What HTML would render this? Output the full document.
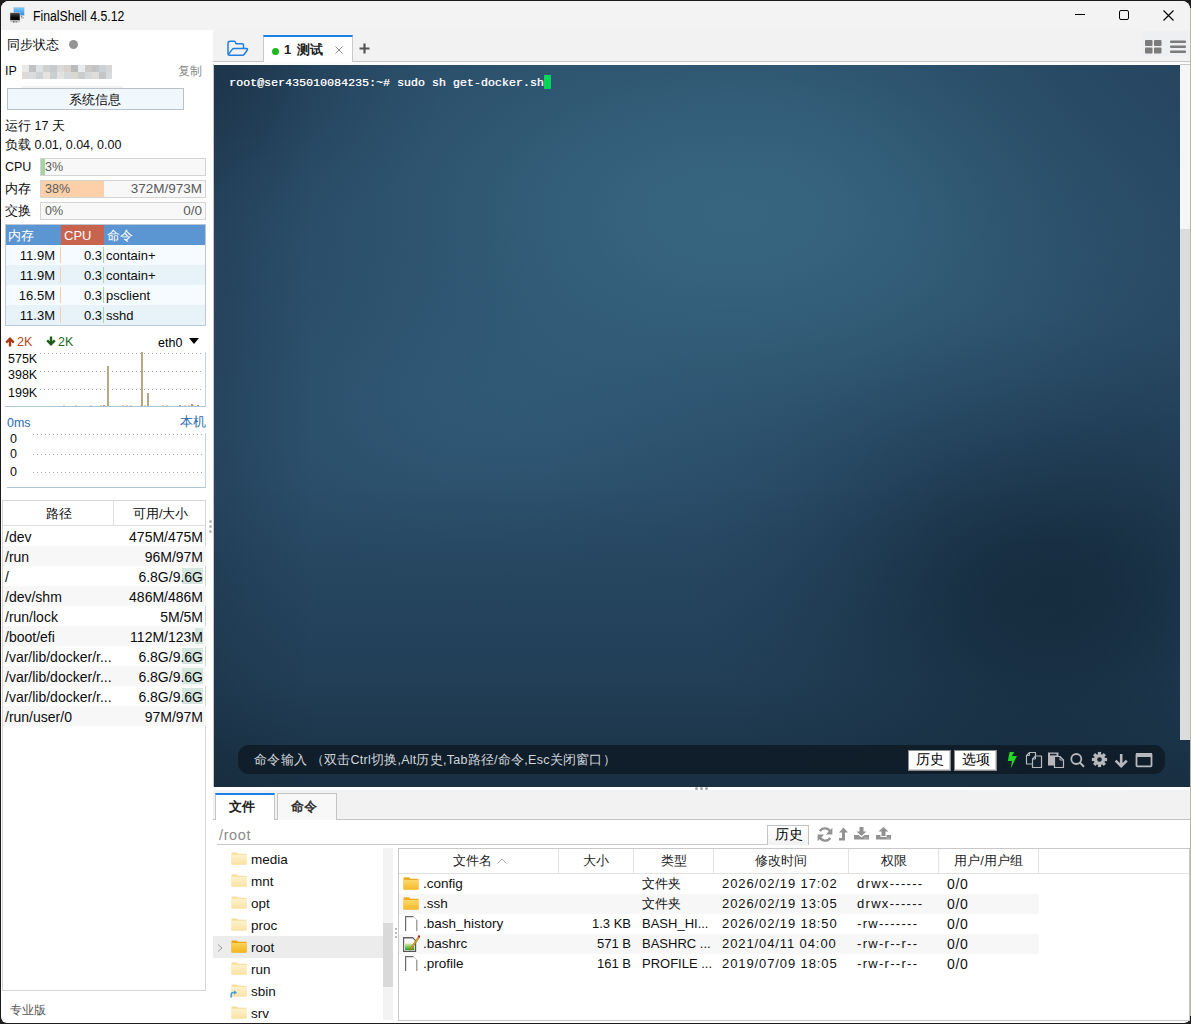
<!DOCTYPE html>
<html><head><meta charset="utf-8">
<style>
*{box-sizing:border-box;margin:0;padding:0}
html,body{width:1191px;height:1024px;overflow:hidden;background:#1c1c1c;font-family:"Liberation Sans",sans-serif;font-size:12px;color:#0c0c0c;position:relative}
.a{position:absolute;white-space:nowrap;line-height:16px}
.r{text-align:right}
.box{position:absolute}
#win{position:absolute;left:1px;top:1px;width:1189px;height:1022px;background:#fff;border-radius:8px 8px 6px 6px;overflow:hidden}
.bar{position:absolute;left:40px;width:166px;height:18px;background:#f8f8f8;border:1px solid #d4d4d4}
.pt{position:absolute;left:5px;width:201px;height:20px}
.pt span{position:absolute;top:3px;line-height:16px;white-space:nowrap;font-size:13px}
.dt{position:absolute;left:3px;width:203px;height:20px}
.dt span{position:absolute;top:3px;line-height:16px;white-space:nowrap;font-size:14px}
.dot{position:absolute;height:1px;background-image:linear-gradient(90deg,#a9a9a9 1px,transparent 1px);background-size:4px 1px}
#term{position:absolute;left:214px;top:65px;width:976px;height:722px;overflow:hidden;
background:
radial-gradient(ellipse 240px 200px at 0px 0px, rgba(14,26,40,0.320) 0%, rgba(14,26,40,0.298) 15%, rgba(14,26,40,0.240) 30%, rgba(14,26,40,0.166) 45%, rgba(14,26,40,0.096) 60%, rgba(14,26,40,0.043) 75%, rgba(14,26,40,0.011) 90%, rgba(14,26,40,0.000) 100%),
radial-gradient(ellipse 420px 300px at 966px 0px, rgba(18,34,52,0.140) 0%, rgba(18,34,52,0.130) 15%, rgba(18,34,52,0.105) 30%, rgba(18,34,52,0.073) 45%, rgba(18,34,52,0.042) 60%, rgba(18,34,52,0.019) 75%, rgba(18,34,52,0.005) 90%, rgba(18,34,52,0.000) 100%),
radial-gradient(ellipse 360px 280px at 830px 520px, rgba(12,28,42,0.580) 0%, rgba(12,28,42,0.540) 15%, rgba(12,28,42,0.435) 30%, rgba(12,28,42,0.301) 45%, rgba(12,28,42,0.175) 60%, rgba(12,28,42,0.079) 75%, rgba(12,28,42,0.020) 90%, rgba(12,28,42,0.000) 100%),
radial-gradient(ellipse 200px 300px at 966px 420px, rgba(14,30,44,0.150) 0%, rgba(14,30,44,0.140) 15%, rgba(14,30,44,0.112) 30%, rgba(14,30,44,0.078) 45%, rgba(14,30,44,0.045) 60%, rgba(14,30,44,0.020) 75%, rgba(14,30,44,0.005) 90%, rgba(14,30,44,0.000) 100%),
linear-gradient(180deg, rgba(12,26,38,0) 58%, rgba(12,26,38,.25) 85%, rgba(12,26,38,.55) 100%),
linear-gradient(90deg, rgba(16,30,46,.18) 0%, rgba(16,30,46,0) 10%),
radial-gradient(ellipse 560px 320px at 520px 150px, rgba(64,118,144,0.600) 0%, rgba(64,118,144,0.558) 15%, rgba(64,118,144,0.450) 30%, rgba(64,118,144,0.311) 45%, rgba(64,118,144,0.181) 60%, rgba(64,118,144,0.082) 75%, rgba(64,118,144,0.021) 90%, rgba(64,118,144,0.000) 100%),
radial-gradient(ellipse 360px 190px at 260px 350px, rgba(58,108,138,0.320) 0%, rgba(58,108,138,0.298) 15%, rgba(58,108,138,0.240) 30%, rgba(58,108,138,0.166) 45%, rgba(58,108,138,0.096) 60%, rgba(58,108,138,0.043) 75%, rgba(58,108,138,0.011) 90%, rgba(58,108,138,0.000) 100%),
#294b67}
</style></head><body>
<div id="win"></div>
<!-- title bar -->
<div class="box" style="left:1px;top:1px;width:1189px;height:29px;background:#f3f3f3;border-radius:8px 8px 0 0"></div>
<svg class="box" style="left:9px;top:6px" width="17" height="18" viewBox="0 0 17 18">
 <defs><linearGradient id="gb" x1="0" y1="0" x2="0" y2="1"><stop offset="0" stop-color="#80d0fa"/><stop offset="1" stop-color="#2688ee"/></linearGradient>
 <linearGradient id="gk" x1="0" y1="0" x2="0" y2="1"><stop offset="0" stop-color="#4a4a4a"/><stop offset=".6" stop-color="#0a0a0a"/><stop offset="1" stop-color="#000"/></linearGradient></defs>
 <rect x="4.6" y="1.2" width="10.6" height="8.4" fill="url(#gb)" stroke="#d8d0c8" stroke-width=".5"/>
 <path d="M11.5 10.2H13.5L13 11H12Z" fill="#555"/><rect x="12" y="11.5" width="3" height=".8" fill="#888"/>
 <rect x="1" y="6.8" width="10" height="7.6" fill="url(#gk)" stroke="#e0dcd6" stroke-width=".5"/>
 <rect x="1.5" y="15.4" width="9.5" height=".9" fill="#b0b0b0"/><rect x="4" y="15.2" width="1.6" height="1.2" fill="#555"/><rect x="6.5" y="15.2" width="1.6" height="1.2" fill="#777"/>
</svg>
<div class="a" style="left:33px;top:8px;font-size:14px;color:#000;transform:scaleX(.875);transform-origin:0 0">FinalShell 4.5.12</div>
<div class="box" style="left:1075px;top:14px;width:10px;height:1px;background:#000"></div>
<div class="box" style="left:1119px;top:10px;width:10px;height:10px;border:1px solid #000;border-radius:2px"></div>
<svg class="box" style="left:1163px;top:10px" width="11" height="11" viewBox="0 0 11 11"><path d="M0.5 0.5L10.5 10.5M10.5 0.5L0.5 10.5" stroke="#000" stroke-width="1.1"/></svg>

<!-- left panel -->
<div class="a" style="left:7px;top:37px;font-size:13px">同步状态</div>
<div class="box" style="left:69px;top:40px;width:9px;height:9px;border-radius:50%;background:#959595"></div>
<div class="a" style="left:5px;top:63px;font-size:12.5px">IP</div>
<div class="box" style="left:22px;top:65px;width:7px;height:7px;background:#e9e9e9"></div><div class="box" style="left:29px;top:65px;width:7px;height:7px;background:#c2c2c2"></div><div class="box" style="left:36px;top:65px;width:7px;height:7px;background:#dde2e6"></div><div class="box" style="left:43px;top:65px;width:7px;height:7px;background:#d0d0d0"></div><div class="box" style="left:50px;top:65px;width:7px;height:7px;background:#c6cacd"></div><div class="box" style="left:57px;top:65px;width:7px;height:7px;background:#dadada"></div><div class="box" style="left:64px;top:65px;width:7px;height:7px;background:#d8d2cd"></div><div class="box" style="left:71px;top:65px;width:7px;height:7px;background:#bababa"></div><div class="box" style="left:78px;top:65px;width:7px;height:7px;background:#e7ebee"></div><div class="box" style="left:85px;top:65px;width:7px;height:7px;background:#cdc9c6"></div><div class="box" style="left:92px;top:65px;width:7px;height:7px;background:#c4c4c4"></div><div class="box" style="left:99px;top:65px;width:7px;height:7px;background:#c9d0d6"></div><div class="box" style="left:106px;top:65px;width:6px;height:7px;background:#d6d6d6"></div><div class="box" style="left:22px;top:72px;width:7px;height:7px;background:#dcd9d6"></div><div class="box" style="left:29px;top:72px;width:7px;height:7px;background:#dadde0"></div><div class="box" style="left:36px;top:72px;width:7px;height:7px;background:#ced2d5"></div><div class="box" style="left:43px;top:72px;width:7px;height:7px;background:#e6e3de"></div><div class="box" style="left:50px;top:72px;width:7px;height:7px;background:#c9cfd4"></div><div class="box" style="left:57px;top:72px;width:7px;height:7px;background:#e3e3e0"></div><div class="box" style="left:64px;top:72px;width:7px;height:7px;background:#d6d9dc"></div><div class="box" style="left:71px;top:72px;width:7px;height:7px;background:#dad6d0"></div><div class="box" style="left:78px;top:72px;width:7px;height:7px;background:#cacccd"></div><div class="box" style="left:85px;top:72px;width:7px;height:7px;background:#d5d9dc"></div><div class="box" style="left:92px;top:72px;width:7px;height:7px;background:#e0dcd8"></div><div class="box" style="left:99px;top:72px;width:7px;height:7px;background:#c6c6c6"></div><div class="box" style="left:106px;top:72px;width:6px;height:7px;background:#d7dbde"></div><div class="box" style="left:22px;top:86px;width:101px;height:2px;background:#f1f3f5"></div>
<div class="a" style="left:178px;top:63px;color:#8a8a8a">复制</div>
<div class="box" style="left:7px;top:88px;width:177px;height:22px;background:#f0f8fd;border:1px solid #b8c1c9"></div>
<div class="a" style="left:69px;top:92px;font-size:13px">系统信息</div>
<div class="a" style="left:5px;top:118px;font-size:12.5px">运行 17 天</div>
<div class="a" style="left:5px;top:137px;font-size:12.5px">负载 0.01, 0.04, 0.00</div>

<div class="a" style="left:5px;top:159px;font-size:12.5px">CPU</div>
<div class="bar" style="top:158px"><div class="box" style="left:0;top:0;width:4px;height:16px;background:#a2d5a2"></div></div>
<div class="a" style="left:45px;top:159px;font-size:12.5px;color:#5a5a5a">3%</div>
<div class="a" style="left:5px;top:181px;font-size:12.5px">内存</div>
<div class="bar" style="top:180px"><div class="box" style="left:0;top:0;width:63px;height:16px;background:#fdd0a9"></div></div>
<div class="a" style="left:45px;top:181px;font-size:12.5px;color:#5a5a5a">38%</div>
<div class="a r" style="left:110px;width:92px;top:181px;font-size:13.5px;color:#5a5a5a">372M/973M</div>
<div class="a" style="left:5px;top:203px;font-size:12.5px">交换</div>
<div class="bar" style="top:202px"></div>
<div class="a" style="left:45px;top:203px;font-size:12.5px;color:#5a5a5a">0%</div>
<div class="a r" style="left:110px;width:92px;top:203px;font-size:13.5px;color:#5a5a5a">0/0</div>

<!-- process table -->
<div class="box" style="left:5px;top:224px;width:201px;height:102px;border:1px solid #b9c9d6;background:#f5fbfe"></div>
<div class="box" style="left:6px;top:225px;width:199px;height:20px;background:#5b95d2"></div>
<div class="box" style="left:61px;top:225px;width:43px;height:20px;background:#c8634d"></div>
<div class="a" style="left:8px;top:228px;font-size:13px;color:#fff">内存</div>
<div class="a" style="left:64px;top:228px;font-size:13px;color:#fff">CPU</div>
<div class="a" style="left:107px;top:228px;font-size:13px;color:#fff">命令</div>
<div class="pt" style="top:245px;left:6px;width:199px;background:#f5fbfe"><span class="r" style="right:150px">11.9M</span><span style="left:100px">contain+</span></div>
<div class="pt" style="top:265px;left:6px;width:199px;background:#e7f3f9"><span class="r" style="right:150px">11.9M</span><span style="left:100px">contain+</span></div>
<div class="pt" style="top:285px;left:6px;width:199px;background:#f5fbfe"><span class="r" style="right:150px">16.5M</span><span style="left:100px">psclient</span></div>
<div class="pt" style="top:305px;left:6px;width:199px;background:#e7f3f9"><span class="r" style="right:150px">11.3M</span><span style="left:100px">sshd</span></div>
<div class="a r" style="left:60px;width:42px;top:248px;font-size:13px">0.3</div>
<div class="a r" style="left:60px;width:42px;top:268px;font-size:13px">0.3</div>
<div class="a r" style="left:60px;width:42px;top:288px;font-size:13px">0.3</div>
<div class="a r" style="left:60px;width:42px;top:308px;font-size:13px">0.3</div>
<div class="box" style="left:60px;top:247px;width:1px;height:16px;background:#f7cdb0"></div>
<div class="box" style="left:60px;top:267px;width:1px;height:16px;background:#f7cdb0"></div>
<div class="box" style="left:60px;top:287px;width:1px;height:16px;background:#f7cdb0"></div>
<div class="box" style="left:60px;top:307px;width:1px;height:16px;background:#f7cdb0"></div>
<div class="box" style="left:103px;top:247px;width:1px;height:16px;background:#a9d9a9"></div>
<div class="box" style="left:103px;top:267px;width:1px;height:16px;background:#a9d9a9"></div>
<div class="box" style="left:103px;top:287px;width:1px;height:16px;background:#a9d9a9"></div>
<div class="box" style="left:103px;top:307px;width:1px;height:16px;background:#a9d9a9"></div>

<!-- network -->
<svg class="box" style="left:5px;top:337px" width="10" height="10" viewBox="0 0 10 10"><path d="M1.2 5.6L5 1.8L8.8 5.6M5 2.5V9.5" fill="none" stroke="#a93b12" stroke-width="2.4" stroke-linejoin="miter"/></svg>
<div class="a" style="left:17px;top:334px;font-size:12.5px;color:#b3461b">2K</div>
<svg class="box" style="left:46px;top:336px" width="10" height="10" viewBox="0 0 10 10"><path d="M1.2 4.4L5 8.2L8.8 4.4M5 0.5V7.5" fill="none" stroke="#1b5e1b" stroke-width="2.4" stroke-linejoin="miter"/></svg>
<div class="a" style="left:58px;top:334px;font-size:12.5px;color:#1d6a1d">2K</div>
<div class="a" style="left:158px;top:335px;font-size:12.5px;color:#000">eth0</div>
<svg class="box" style="left:189px;top:338px" width="10" height="6" viewBox="0 0 10 6"><path d="M0 0H10L5 6Z" fill="#000"/></svg>
<div class="box" style="left:5px;top:352px;width:201px;height:55px;border-right:1px solid #c4d4de;border-bottom:1px solid #a9c4d6"></div><div class="box" style="left:90px;top:405px;width:2px;height:1px;background:#fcc8ac"></div><div class="box" style="left:100px;top:405px;width:2px;height:1px;background:#fcc8ac"></div><div class="box" style="left:122px;top:405px;width:2px;height:1px;background:#fcc8ac"></div><div class="box" style="left:126px;top:405px;width:2px;height:1px;background:#fcc8ac"></div><div class="box" style="left:130px;top:405px;width:2px;height:1px;background:#fcc8ac"></div><div class="box" style="left:140px;top:405px;width:2px;height:1px;background:#fcc8ac"></div><div class="box" style="left:144px;top:405px;width:2px;height:1px;background:#fcc8ac"></div><div class="box" style="left:162px;top:405px;width:2px;height:1px;background:#fcc8ac"></div><div class="box" style="left:166px;top:405px;width:2px;height:1px;background:#fcc8ac"></div><div class="box" style="left:184px;top:405px;width:2px;height:1px;background:#fcc8ac"></div><div class="box" style="left:188px;top:405px;width:2px;height:1px;background:#fcc8ac"></div><div class="box" style="left:192px;top:405px;width:2px;height:1px;background:#fcc8ac"></div><div class="box" style="left:103px;top:405px;width:2px;height:1px;background:#a89a70"></div><div class="box" style="left:179px;top:405px;width:2px;height:1px;background:#a89a70"></div><div class="box" style="left:191px;top:404px;width:2px;height:2px;background:#a89a70"></div><div class="box" style="left:197px;top:405px;width:2px;height:1px;background:#a89a70"></div><div class="box" style="left:75px;top:405px;width:2px;height:1px;background:#fcc8ac"></div><div class="box" style="left:63px;top:405px;width:2px;height:1px;background:#fcc8ac"></div>
<div class="dot" style="left:40px;top:353px;width:164px"></div>
<div class="dot" style="left:40px;top:371px;width:164px"></div>
<div class="dot" style="left:40px;top:389px;width:164px"></div>
<div class="a" style="left:8px;top:351px;font-size:12.5px">575K</div>
<div class="a" style="left:8px;top:367px;font-size:12.5px">398K</div>
<div class="a" style="left:8px;top:385px;font-size:12.5px">199K</div>
<div class="box" style="left:107px;top:366px;width:2px;height:40px;background:#b8a87d"></div>
<div class="box" style="left:141px;top:352px;width:2px;height:54px;background:#b8a87d"></div>
<div class="box" style="left:147px;top:393px;width:2px;height:13px;background:#b8a87d"></div>

<div class="a" style="left:7px;top:415px;font-size:12.5px;color:#2a6cac">0ms</div>
<div class="a" style="left:180px;top:414px;font-size:12.5px;color:#2a6cac">本机</div>
<div class="box" style="left:7px;top:433px;width:199px;height:55px;border-right:1px solid #c4d4de;border-bottom:1px solid #a9c4d6"></div>
<div class="dot" style="left:33px;top:434px;width:170px"></div>
<div class="dot" style="left:33px;top:454px;width:170px"></div>
<div class="dot" style="left:33px;top:472px;width:170px"></div>
<div class="a" style="left:10px;top:431px;font-size:12.5px">0</div>
<div class="a" style="left:10px;top:446px;font-size:12.5px">0</div>
<div class="a" style="left:10px;top:464px;font-size:12.5px">0</div>

<!-- disk table -->
<div class="box" style="left:2px;top:500px;width:204px;height:491px;border:1px solid #d6d6d6"></div>
<div class="box" style="left:3px;top:525px;width:202px;height:1px;background:#dedede"></div>
<div class="box" style="left:113px;top:501px;width:1px;height:24px;background:#dedede"></div>
<div class="a" style="left:46px;top:506px;font-size:12.5px">路径</div>
<div class="a" style="left:133px;top:506px;font-size:12.5px">可用/大小</div>
<div class="dt" style="top:526px"><span style="left:2px">/dev</span><span class="r" style="right:3px">475M/475M</span></div>
<div class="dt" style="top:546px;background:#f7f7f7"><span style="left:2px">/run</span><span class="r" style="right:3px">96M/97M</span></div>
<div class="dt" style="top:566px"><div class="box" style="left:179px;top:2px;width:21px;height:16px;background:#d5e7df"></div><span style="left:2px">/</span><span class="r" style="right:3px">6.8G/9.6G</span></div>
<div class="dt" style="top:586px;background:#f7f7f7"><span style="left:2px">/dev/shm</span><span class="r" style="right:3px">486M/486M</span></div>
<div class="dt" style="top:606px"><span style="left:2px">/run/lock</span><span class="r" style="right:3px">5M/5M</span></div>
<div class="dt" style="top:626px;background:#f7f7f7"><div class="box" style="left:192px;top:2px;width:8px;height:16px;background:#d5e7df"></div><span style="left:2px">/boot/efi</span><span class="r" style="right:3px">112M/123M</span></div>
<div class="dt" style="top:646px"><div class="box" style="left:179px;top:2px;width:21px;height:16px;background:#d5e7df"></div><span style="left:2px">/var/lib/docker/r...</span><span class="r" style="right:3px">6.8G/9.6G</span></div>
<div class="dt" style="top:666px;background:#f7f7f7"><div class="box" style="left:179px;top:2px;width:21px;height:16px;background:#d5e7df"></div><span style="left:2px">/var/lib/docker/r...</span><span class="r" style="right:3px">6.8G/9.6G</span></div>
<div class="dt" style="top:686px"><div class="box" style="left:179px;top:2px;width:21px;height:16px;background:#d5e7df"></div><span style="left:2px">/var/lib/docker/r...</span><span class="r" style="right:3px">6.8G/9.6G</span></div>
<div class="dt" style="top:706px;background:#f7f7f7"><span style="left:2px">/run/user/0</span><span class="r" style="right:3px">97M/97M</span></div>
<div class="box" style="left:209px;top:520px;width:3px;height:3px;border-radius:50%;background:#bbb"></div>
<div class="box" style="left:209px;top:525px;width:3px;height:3px;border-radius:50%;background:#bbb"></div>
<div class="box" style="left:209px;top:530px;width:3px;height:3px;border-radius:50%;background:#bbb"></div>
<div class="a" style="left:10px;top:1002px;font-size:12px;color:#555">专业版</div>


<!-- right side -->
<div class="box" style="left:213px;top:30px;width:977px;height:32px;background:#f2f2f2;border-bottom:1px solid #c6c6c6"></div>
<div class="box" style="left:213px;top:62px;width:977px;height:3px;background:#fbfbfb"></div><div class="box" style="left:213px;top:64px;width:1px;height:723px;background:#c8c8c8"></div>
<div class="box" style="left:1142px;top:31px;width:47px;height:25px;background:#eeeff2"></div>
<svg class="box" style="left:227px;top:40px" width="22" height="17" viewBox="0 0 22 17"><path d="M1 14V3.5Q1 1.2 3.2 1.2H7.2Q7.8 1.2 8.2 1.8L9 3.8H15.3Q16.5 3.8 16.5 5V8.4" fill="none" stroke="#1f80e2" stroke-width="1.5" stroke-linejoin="round"/><path d="M1.2 14.6L5.2 9.4Q5.8 8.4 7 8.4H19.5Q21 8.6 20.3 10L17.3 14.2Q16.6 15.2 15.5 15.2H2.4Q1 15.2 1 14" fill="none" stroke="#1f80e2" stroke-width="1.5" stroke-linejoin="round"/></svg>
<div class="box" style="left:263px;top:35px;width:90px;height:27px;background:#fff;border:1px solid #c9c9c9;border-bottom:none;border-top:2px solid #1d80e8"></div>
<div class="box" style="left:272px;top:47.5px;width:7px;height:7px;border-radius:50%;background:#1fb51f"></div>
<div class="a" style="left:284px;top:42px;font-size:13px;font-weight:bold;color:#222">1<span style="margin-left:2px"> 测试</span></div>
<svg class="box" style="left:335px;top:46px" width="8" height="8" viewBox="0 0 8 8"><path d="M0.5 0.5L7.5 7.5M7.5 0.5L0.5 7.5" stroke="#8a8a8a" stroke-width="1"/></svg>
<svg class="box" style="left:359px;top:43px" width="11" height="11" viewBox="0 0 11 11"><path d="M5.5 0.5V10.5M0.5 5.5H10.5" stroke="#555" stroke-width="2.2"/></svg>
<svg class="box" style="left:1145px;top:40px" width="17" height="14" viewBox="0 0 17 14"><rect x="0" y="0" width="7.5" height="6" rx="1" fill="#7b7b7b"/><rect x="9" y="0" width="7.5" height="6" rx="1" fill="#7b7b7b"/><rect x="0" y="7.5" width="7.5" height="6" rx="1" fill="#7b7b7b"/><rect x="9" y="7.5" width="7.5" height="6" rx="1" fill="#7b7b7b"/></svg>
<svg class="box" style="left:1170px;top:40px" width="17" height="14" viewBox="0 0 17 14"><rect x="0" y="0.5" width="16" height="2.5" rx="1" fill="#7b7b7b"/><rect x="0" y="5.5" width="16" height="2.5" rx="1" fill="#7b7b7b"/><rect x="0" y="10.5" width="16" height="2.5" rx="1" fill="#7b7b7b"/></svg>

<div id="term">
 <div class="a" style="left:15px;top:10px;font-family:'Liberation Mono',monospace;font-size:11.67px;color:#fff;text-shadow:.4px 0 0 rgba(255,255,255,.7)">root@ser435010084235:~# sudo sh get-docker.sh</div>
 <div class="box" style="left:330px;top:10px;width:7px;height:14px;background:#00d65a"></div>
 <div class="box" style="left:24px;top:680px;width:927px;height:29px;border-radius:11px;background:rgba(12,22,32,.72)"></div>
</div>
<div class="a" style="left:254px;top:752px;font-size:12.5px;color:#d0d6dc;letter-spacing:0.25px">命令输入 （双击Ctrl切换,Alt历史,Tab路径/命令,Esc关闭窗口）</div>
<div class="box" style="left:908px;top:750px;width:43px;height:21px;background:#fff;border:1px solid #8c8c8c;box-shadow:inset -1px -1px 0 #d0d0d0"></div>
<div class="a" style="left:916px;top:752px;font-size:13.5px;color:#000">历史</div>
<div class="box" style="left:954px;top:750px;width:43px;height:21px;background:#fff;border:1px solid #8c8c8c;box-shadow:inset -1px -1px 0 #d0d0d0"></div>
<div class="a" style="left:962px;top:752px;font-size:13.5px;color:#000">选项</div>
<svg class="box" style="left:1007px;top:751px" width="11" height="19" viewBox="0 0 11 19"><path d="M2.6 1H7.2L5 5H9.9L3.7 17.6L5 10H0.8Z" fill="#22d822"/></svg>
<svg class="box" style="left:1025px;top:751px" width="18" height="18" viewBox="0 0 18 18"><path d="M1.5 4.5L4.5 1.5H10.5V13H1.5Z" fill="none" stroke="#b5b9bd" stroke-width="1.2" stroke-linejoin="round"/><path d="M1.5 4.5H4.5V1.5" fill="none" stroke="#b5b9bd" stroke-width="1"/><path d="M7.5 8L10.5 5H16.5V16.5H7.5Z" fill="#14202b" stroke="#b5b9bd" stroke-width="1.2" stroke-linejoin="round"/><path d="M7.5 8H10.5V5" fill="none" stroke="#b5b9bd" stroke-width="1"/></svg>
<svg class="box" style="left:1047px;top:751px" width="18" height="18" viewBox="0 0 18 18"><path d="M1 1.5H11.5V14.5H1Z" fill="#b5b9bd"/><rect x="3" y="2.8" width="6.5" height="1.6" fill="#1c2a36"/><path d="M7.5 5.5H13L16.5 9V16.5H7.5Z" fill="#14202b" stroke="#b5b9bd" stroke-width="1.2" stroke-linejoin="round"/><path d="M13 5.5V9H16.5" fill="none" stroke="#b5b9bd" stroke-width="1"/></svg>
<svg class="box" style="left:1069px;top:752px" width="17" height="17" viewBox="0 0 17 17"><circle cx="7.3" cy="7" r="5" fill="none" stroke="#b5b9bd" stroke-width="1.8"/><path d="M10.8 10.5L15 14.8" stroke="#b5b9bd" stroke-width="2"/></svg>
<svg class="box" style="left:1091px;top:751px" width="17" height="17" viewBox="-8.5 -8.5 17 17"><g fill="#b5b9bd"><circle r="5.6"/><rect x="-1.6" y="-7.6" width="3.2" height="15.2"/><rect x="-7.6" y="-1.6" width="15.2" height="3.2"/><rect x="-1.6" y="-7.6" width="3.2" height="15.2" transform="rotate(45)"/><rect x="-1.6" y="-7.6" width="3.2" height="15.2" transform="rotate(-45)"/></g><circle r="2.3" fill="#15222d"/></svg>
<svg class="box" style="left:1114px;top:753px" width="15" height="15" viewBox="0 0 15 15"><path d="M7.2 1V13M1.6 7.6L7.2 13.2L12.8 7.6" fill="none" stroke="#b5b9bd" stroke-width="2.6"/></svg>
<svg class="box" style="left:1135px;top:752px" width="18" height="16" viewBox="0 0 18 16"><rect x="1.5" y="1.8" width="15" height="12.5" rx=".8" fill="none" stroke="#b5b9bd" stroke-width="1.8"/><rect x="1" y="1" width="16" height="4" fill="#b5b9bd"/></svg>
<div class="box" style="left:1180px;top:64px;width:10px;height:1px;background:#c8c8c8"></div><div class="box" style="left:1180px;top:65px;width:10px;height:675px;background:#f6f6f6"></div><div class="box" style="left:1190px;top:8px;width:1px;height:1008px;background:#b9b7aa"></div>
<div class="box" style="left:1180px;top:229px;width:10px;height:511px;background:#dcdcdc"></div>

<!-- bottom panel -->
<div class="box" style="left:213px;top:787px;width:977px;height:3px;background:#fdfdfd"></div>
<div class="box" style="left:695px;top:787px;width:3px;height:3px;border-radius:50%;background:#a8a8a8"></div>
<div class="box" style="left:700px;top:787px;width:3px;height:3px;border-radius:50%;background:#a8a8a8"></div>
<div class="box" style="left:705px;top:787px;width:3px;height:3px;border-radius:50%;background:#a8a8a8"></div>
<div class="box" style="left:213px;top:790px;width:977px;height:30px;background:#f2f2f2;border-bottom:1px solid #c4c4c4"></div>
<div class="box" style="left:215px;top:793px;width:60px;height:27px;background:#fff;border:1px solid #c4c4c4;border-bottom:none;border-top:2px solid #1d80e8"></div>
<div class="a" style="left:229px;top:799px;font-size:13px;font-weight:bold;color:#222">文件</div>
<div class="box" style="left:277px;top:793px;width:60px;height:27px;background:#f8f8f8;border:1px solid #c4c4c4;border-bottom:none"></div>
<div class="a" style="left:291px;top:799px;font-size:13px;font-weight:bold;color:#333">命令</div>
<div class="a" style="left:219px;top:827px;font-size:14.5px;letter-spacing:.6px;color:#8c8c8c">/root</div>
<div class="box" style="left:217px;top:844px;width:592px;height:1px;background:#c8c8c8"></div>
<div class="box" style="left:767px;top:825px;width:42px;height:20px;background:linear-gradient(#fff,#f1f1f1);border:1px solid #c4c4c4;border-bottom:none"></div>
<div class="a" style="left:775px;top:827px;font-size:13.5px;color:#000">历史</div>
<svg class="box" style="left:817px;top:827px" width="16" height="15" viewBox="0 0 16 15"><path d="M13.6 5.6A6 6 0 0 0 2.8 4.2M2.4 9.4A6 6 0 0 0 13.2 10.8" fill="none" stroke="#929292" stroke-width="2.3"/><path d="M15.4 0.8V7.4H8.8Z" fill="#929292"/><path d="M0.6 14.2V7.6H7.2Z" fill="#929292"/></svg>
<svg class="box" style="left:838px;top:827px" width="11" height="14" viewBox="0 0 11 14"><path d="M5.5 0.5L10 5.5H7V13.5H1V11H4V5.5H1Z" fill="#929292"/></svg>
<svg class="box" style="left:853px;top:827px" width="17" height="13" viewBox="0 0 17 13"><path d="M6.5 0H10.5V4.5H13.5L8.5 9L3.5 4.5H6.5Z" fill="#929292"/><path d="M1 8H5.5L8.5 10.5L11.5 8H16V12.5H1Z" fill="#929292"/><rect x="11.5" y="10.5" width="1" height="1" fill="#e0e0e0"/><rect x="13.5" y="10.5" width="1" height="1" fill="#e0e0e0"/></svg>
<svg class="box" style="left:875px;top:827px" width="17" height="13" viewBox="0 0 17 13"><path d="M6.5 9H10.5V4.5H13.5L8.5 0L3.5 4.5H6.5Z" fill="#929292"/><path d="M1 8H5.5V10H11.5V8H16V12.5H1Z" fill="#929292"/><rect x="11.5" y="10.5" width="1" height="1" fill="#e0e0e0"/><rect x="13.5" y="10.5" width="1" height="1" fill="#e0e0e0"/></svg>

<!-- tree -->
<div class="box" style="left:213px;top:936px;width:170px;height:22px;background:#ececec"></div>
<svg class="box" style="left:217px;top:944px" width="6" height="8" viewBox="0 0 6 8"><path d="M1 0.5L5 4L1 7.5" fill="none" stroke="#9a9a9a" stroke-width="1"/></svg>
<svg class="box" style="left:231px;top:852px" width="16" height="13" viewBox="0 0 16 13"><defs><linearGradient id="fp0" x1="0" y1="0" x2="0" y2="1"><stop offset="0" stop-color="#fff3cc"/><stop offset="1" stop-color="#f9e2a6"/></linearGradient></defs><path d="M0.5 1.2Q0.5 0.5 1.2 0.5H5.5L7 1.8H15.5V12.5H0.5Z" fill="#f7dc9a"/><rect x="0.5" y="2.8" width="15" height="9.7" rx=".6" fill="url(#fp0)"/></svg><div class="a" style="left:251px;top:852px;font-size:13.5px;color:#111">media</div><svg class="box" style="left:231px;top:874px" width="16" height="13" viewBox="0 0 16 13"><defs><linearGradient id="fp1" x1="0" y1="0" x2="0" y2="1"><stop offset="0" stop-color="#fff3cc"/><stop offset="1" stop-color="#f9e2a6"/></linearGradient></defs><path d="M0.5 1.2Q0.5 0.5 1.2 0.5H5.5L7 1.8H15.5V12.5H0.5Z" fill="#f7dc9a"/><rect x="0.5" y="2.8" width="15" height="9.7" rx=".6" fill="url(#fp1)"/></svg><div class="a" style="left:251px;top:874px;font-size:13.5px;color:#111">mnt</div><svg class="box" style="left:231px;top:896px" width="16" height="13" viewBox="0 0 16 13"><defs><linearGradient id="fp2" x1="0" y1="0" x2="0" y2="1"><stop offset="0" stop-color="#fff3cc"/><stop offset="1" stop-color="#f9e2a6"/></linearGradient></defs><path d="M0.5 1.2Q0.5 0.5 1.2 0.5H5.5L7 1.8H15.5V12.5H0.5Z" fill="#f7dc9a"/><rect x="0.5" y="2.8" width="15" height="9.7" rx=".6" fill="url(#fp2)"/></svg><div class="a" style="left:251px;top:896px;font-size:13.5px;color:#111">opt</div><svg class="box" style="left:231px;top:918px" width="16" height="13" viewBox="0 0 16 13"><defs><linearGradient id="fp3" x1="0" y1="0" x2="0" y2="1"><stop offset="0" stop-color="#fff3cc"/><stop offset="1" stop-color="#f9e2a6"/></linearGradient></defs><path d="M0.5 1.2Q0.5 0.5 1.2 0.5H5.5L7 1.8H15.5V12.5H0.5Z" fill="#f7dc9a"/><rect x="0.5" y="2.8" width="15" height="9.7" rx=".6" fill="url(#fp3)"/></svg><div class="a" style="left:251px;top:918px;font-size:13.5px;color:#111">proc</div><svg class="box" style="left:231px;top:940px" width="16" height="13" viewBox="0 0 16 13"><defs><linearGradient id="fr" x1="0" y1="0" x2="0" y2="1"><stop offset="0" stop-color="#fbd25a"/><stop offset="1" stop-color="#f2b51e"/></linearGradient></defs><path d="M0.5 1.2Q0.5 0.5 1.2 0.5H5.5L7 1.8H15.5V12.5H0.5Z" fill="#e9a812"/><rect x="0.5" y="3" width="15" height="9.5" rx=".6" fill="url(#fr)"/></svg><div class="a" style="left:251px;top:940px;font-size:13.5px;color:#111">root</div><svg class="box" style="left:231px;top:962px" width="16" height="13" viewBox="0 0 16 13"><defs><linearGradient id="fp5" x1="0" y1="0" x2="0" y2="1"><stop offset="0" stop-color="#fff3cc"/><stop offset="1" stop-color="#f9e2a6"/></linearGradient></defs><path d="M0.5 1.2Q0.5 0.5 1.2 0.5H5.5L7 1.8H15.5V12.5H0.5Z" fill="#f7dc9a"/><rect x="0.5" y="2.8" width="15" height="9.7" rx=".6" fill="url(#fp5)"/></svg><div class="a" style="left:251px;top:962px;font-size:13.5px;color:#111">run</div><svg class="box" style="left:231px;top:984px" width="16" height="13" viewBox="0 0 16 13"><defs><linearGradient id="fp6" x1="0" y1="0" x2="0" y2="1"><stop offset="0" stop-color="#fff3cc"/><stop offset="1" stop-color="#f9e2a6"/></linearGradient></defs><path d="M0.5 1.2Q0.5 0.5 1.2 0.5H5.5L7 1.8H15.5V12.5H0.5Z" fill="#f7dc9a"/><rect x="0.5" y="2.8" width="15" height="9.7" rx=".6" fill="url(#fp6)"/></svg><svg class="box" style="left:230px;top:990px" width="7" height="8" viewBox="0 0 7 8"><path d="M1.2 7.5V4.5Q1.2 2.5 3.2 2.5H4.5" fill="none" stroke="#4a9de0" stroke-width="1.6"/><path d="M4 0.2L7 2.5L4 4.8Z" fill="#4a9de0"/></svg><div class="a" style="left:251px;top:984px;font-size:13.5px;color:#111">sbin</div><svg class="box" style="left:231px;top:1006px" width="16" height="13" viewBox="0 0 16 13"><defs><linearGradient id="fp7" x1="0" y1="0" x2="0" y2="1"><stop offset="0" stop-color="#fff3cc"/><stop offset="1" stop-color="#f9e2a6"/></linearGradient></defs><path d="M0.5 1.2Q0.5 0.5 1.2 0.5H5.5L7 1.8H15.5V12.5H0.5Z" fill="#f7dc9a"/><rect x="0.5" y="2.8" width="15" height="9.7" rx=".6" fill="url(#fp7)"/></svg><div class="a" style="left:251px;top:1006px;font-size:13.5px;color:#111">srv</div>
<div class="box" style="left:383px;top:848px;width:10px;height:172px;background:#f3f3f3"></div>
<div class="box" style="left:383px;top:923px;width:10px;height:64px;background:#d9d9d9"></div>
<div class="box" style="left:395px;top:928px;width:2px;height:2px;background:#bbb"></div>
<div class="box" style="left:395px;top:932px;width:2px;height:2px;background:#bbb"></div>
<div class="box" style="left:395px;top:936px;width:2px;height:2px;background:#bbb"></div>

<!-- file list -->
<div class="box" style="left:398px;top:848px;width:792px;height:173px;border:1px solid #c8c8c8;background:#fff"></div>
<div class="box" style="left:399px;top:873px;width:790px;height:1px;background:#e2e2e2"></div>
<div class="a" style="left:453px;top:853px;font-size:13px;color:#222">文件名</div><div class="a" style="left:559px;width:74px;top:853px;text-align:center;font-size:13px;color:#222">大小</div><div class="a" style="left:634px;width:79px;top:853px;text-align:center;font-size:13px;color:#222">类型</div><div class="a" style="left:714px;width:134px;top:853px;text-align:center;font-size:13px;color:#222">修改时间</div><div class="a" style="left:849px;width:89px;top:853px;text-align:center;font-size:13px;color:#222">权限</div><div class="a" style="left:939px;width:99px;top:853px;text-align:center;font-size:13px;color:#222">用户/用户组</div><div class="box" style="left:558px;top:849px;width:1px;height:24px;background:#e2e2e2"></div><div class="box" style="left:633px;top:849px;width:1px;height:24px;background:#e2e2e2"></div><div class="box" style="left:713px;top:849px;width:1px;height:24px;background:#e2e2e2"></div><div class="box" style="left:848px;top:849px;width:1px;height:24px;background:#e2e2e2"></div><div class="box" style="left:938px;top:849px;width:1px;height:24px;background:#e2e2e2"></div><div class="box" style="left:1038px;top:849px;width:1px;height:24px;background:#e2e2e2"></div><svg class="box" style="left:497px;top:858px" width="10" height="6" viewBox="0 0 10 6"><path d="M0.5 5.5L5 1L9.5 5.5" fill="none" stroke="#aaa" stroke-width="1"/></svg>
<svg class="box" style="left:403px;top:877px" width="16" height="13" viewBox="0 0 16 13"><path d="M0.5 1.2Q0.5 0.3 1.4 0.3H6L7.5 1.8H15.5V12.5H0.5Z" fill="#eeae22"/><defs><linearGradient id="ff877" x1="0" y1="0" x2="0" y2="1"><stop offset="0" stop-color="#fcd868"/><stop offset="1" stop-color="#f5b92c"/></linearGradient></defs><rect x="0.5" y="3" width="15" height="9.6" rx=".7" fill="url(#ff877)"/></svg><div class="a" style="left:423px;top:876px;font-size:13.5px;color:#111">.config</div><div class="a" style="left:642px;top:876px;font-size:13px;color:#111">文件夹</div><div class="a" style="left:722px;top:876px;font-size:13px;color:#111;letter-spacing:.9px">2026/02/19 17:02</div><div class="a" style="left:857px;top:876px;font-size:13px;color:#111;letter-spacing:1.3px">drwx------</div><div class="a" style="left:947px;top:876px;font-size:14px;color:#111;letter-spacing:.6px">0/0</div><div class="box" style="left:399px;top:894px;width:640px;height:20px;background:#f7f7f7"></div><svg class="box" style="left:403px;top:897px" width="16" height="13" viewBox="0 0 16 13"><path d="M0.5 1.2Q0.5 0.3 1.4 0.3H6L7.5 1.8H15.5V12.5H0.5Z" fill="#eeae22"/><defs><linearGradient id="ff897" x1="0" y1="0" x2="0" y2="1"><stop offset="0" stop-color="#fcd868"/><stop offset="1" stop-color="#f5b92c"/></linearGradient></defs><rect x="0.5" y="3" width="15" height="9.6" rx=".7" fill="url(#ff897)"/></svg><div class="a" style="left:423px;top:896px;font-size:13.5px;color:#111">.ssh</div><div class="a" style="left:642px;top:896px;font-size:13px;color:#111">文件夹</div><div class="a" style="left:722px;top:896px;font-size:13px;color:#111;letter-spacing:.9px">2026/02/19 13:05</div><div class="a" style="left:857px;top:896px;font-size:13px;color:#111;letter-spacing:1.3px">drwx------</div><div class="a" style="left:947px;top:896px;font-size:14px;color:#111;letter-spacing:.6px">0/0</div><svg class="box" style="left:405px;top:916px" width="13" height="16" viewBox="0 0 13 16"><path d="M0.6 15V0.6H8.5" fill="none" stroke="#6a6a6a" stroke-width="1.2"/><path d="M8.5 0.6L11.8 3.9" stroke="#c8c8c8" stroke-width="1"/><path d="M11.8 3.9V15" stroke="#8a8a8a" stroke-width="1.2"/></svg><div class="a" style="left:423px;top:916px;font-size:13.5px;color:#111">.bash_history</div><div class="a r" style="left:560px;width:71px;top:916px;font-size:13px;color:#111">1.3 KB</div><div class="a" style="left:642px;top:916px;font-size:13px;color:#111">BASH_HI...</div><div class="a" style="left:722px;top:916px;font-size:13px;color:#111;letter-spacing:.9px">2026/02/19 18:50</div><div class="a" style="left:857px;top:916px;font-size:13px;color:#111;letter-spacing:1.3px">-rw-------</div><div class="a" style="left:947px;top:916px;font-size:14px;color:#111;letter-spacing:.6px">0/0</div><div class="box" style="left:399px;top:934px;width:640px;height:20px;background:#f7f7f7"></div><svg class="box" style="left:403px;top:935px" width="17" height="17" viewBox="0 0 17 17"><path d="M0.6 2.6H9.5L12.6 5.7V16.4H0.6Z" fill="#fafafa" stroke="#555" stroke-width="1.1"/><path d="M2 2V4M4 2V4M6 2V4M8 2V4" stroke="#777" stroke-width=".8"/><defs><linearGradient id="fn" x1="0" y1="0" x2="0" y2="1"><stop offset="0" stop-color="#d8f0a0"/><stop offset="1" stop-color="#2a9a1a"/></linearGradient></defs><rect x="2" y="8.5" width="9.4" height="6.6" fill="url(#fn)"/><path d="M15.6 1.2L7.5 13.2L6.8 15.2L8.6 14.1L16.6 2.2Z" fill="#f2b630" stroke="#9a5a10" stroke-width=".6"/><circle cx="16" cy="1.4" r="1.1" fill="#b01818"/></svg><div class="a" style="left:423px;top:936px;font-size:13.5px;color:#111">.bashrc</div><div class="a r" style="left:560px;width:71px;top:936px;font-size:13px;color:#111">571 B</div><div class="a" style="left:642px;top:936px;font-size:13px;color:#111">BASHRC ...</div><div class="a" style="left:722px;top:936px;font-size:13px;color:#111;letter-spacing:.9px">2021/04/11 04:00</div><div class="a" style="left:857px;top:936px;font-size:13px;color:#111;letter-spacing:1.3px">-rw-r--r--</div><div class="a" style="left:947px;top:936px;font-size:14px;color:#111;letter-spacing:.6px">0/0</div><svg class="box" style="left:405px;top:956px" width="13" height="16" viewBox="0 0 13 16"><path d="M0.6 15V0.6H8.5" fill="none" stroke="#6a6a6a" stroke-width="1.2"/><path d="M8.5 0.6L11.8 3.9" stroke="#c8c8c8" stroke-width="1"/><path d="M11.8 3.9V15" stroke="#8a8a8a" stroke-width="1.2"/></svg><div class="a" style="left:423px;top:956px;font-size:13.5px;color:#111">.profile</div><div class="a r" style="left:560px;width:71px;top:956px;font-size:13px;color:#111">161 B</div><div class="a" style="left:642px;top:956px;font-size:13px;color:#111">PROFILE ...</div><div class="a" style="left:722px;top:956px;font-size:13px;color:#111;letter-spacing:.9px">2019/07/09 18:05</div><div class="a" style="left:857px;top:956px;font-size:13px;color:#111;letter-spacing:1.3px">-rw-r--r--</div><div class="a" style="left:947px;top:956px;font-size:14px;color:#111;letter-spacing:.6px">0/0</div>
</body></html>
